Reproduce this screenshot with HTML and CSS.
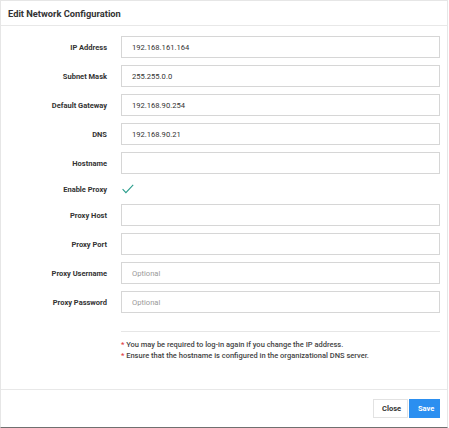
FILE: index.html
```html
<!DOCTYPE html>
<html>
<head>
<meta charset="utf-8">
<link rel="stylesheet" href="styles.css">
</head>
<body>
<div class="modal">
  <div class="modal-header">
    <h1 class="title">Edit Network Configuration</h1>
  </div>
  <div class="modal-body">
    <div class="form">
      <label class="label">IP Address</label>
      <div class="input">192.168.161.164</div>
      <label class="label">Subnet Mask</label>
      <div class="input">255.255.0.0</div>
      <label class="label">Default Gateway</label>
      <div class="input">192.168.90.254</div>
      <label class="label">DNS</label>
      <div class="input">192.168.90.21</div>
      <label class="label">Hostname</label>
      <div class="input"></div>
      <label class="label short">Enable Proxy</label>
      <div class="check-cell">
        <svg class="check" width="12" height="10" viewBox="0 0 12 10"><path d="M0.6 5.2 L3.9 8.6 L11.2 0.8" fill="none" stroke="#2a9d8c" stroke-width="1.1"/></svg>
      </div>
      <label class="label">Proxy Host</label>
      <div class="input"></div>
      <label class="label">Proxy Port</label>
      <div class="input"></div>
      <label class="label">Proxy Username</label>
      <div class="input placeholder">Optional</div>
      <label class="label">Proxy Password</label>
      <div class="input placeholder">Optional</div>
    </div>
    <div class="notes">
      <p class="note"><span class="star">*</span> You may be required to log-in again if you change the IP address.</p>
      <p class="note"><span class="star">*</span> Ensure that the hostname is configured in the organizational DNS server.</p>
    </div>
  </div>
  <div class="modal-footer">
    <button class="btn btn-close">Close</button>
    <button class="btn btn-save">Save</button>
  </div>
</div>
</body>
</html>
```
FILE: styles.css
```css
html, body {
  margin: 0;
  padding: 0;
  background: #ffffff;
}
body {
  font-family: Roboto, "Liberation Sans", Arial, sans-serif;
  color: #333333;
}
.modal {
  width: 448px;
  height: 428px;
  border: 1px solid #e6e6e6;
  border-bottom: 1px solid #707070;
  display: flex;
  flex-direction: column;
  box-sizing: border-box;
}
.modal-header {
  height: 24px;
  border-bottom: 1px solid #e8e8e8;
  display: flex;
  align-items: center;
  padding-left: 7px;
}
.title {
  margin: 0;
  font-size: 9.3px;
  font-weight: 700;
  color: #333;
}
.modal-body {
  flex: 1;
  padding: 10px 7px 0 0;
}
.form {
  display: grid;
  grid-template-columns: 106px 1fr;
  column-gap: 14px;
  row-gap: 7px;
}
.label {
  font-size: 7.5px;
  font-weight: 700;
  text-align: right;
  align-self: center;
  color: #333;
}
.input {
  height: 22px;
  box-sizing: border-box;
  border: 1px solid #d6d6d6;
  display: flex;
  align-items: center;
  padding-left: 10px;
  font-size: 7.6px;
  color: #333;
}
.input.placeholder {
  color: #9a9a9a;
}
.check-cell {
  height: 16px;
  display: flex;
  align-items: center;
  padding-left: 1px;
}
.notes {
  margin: 18px 0 0 120px;
  border-top: 1px solid #e6e6e6;
  padding-top: 7px;
}
.note {
  margin: 0;
  font-size: 7.5px;
  font-weight: 500;
  line-height: 11px;
  color: #444;
}
.star {
  color: #e0383e;
}
.modal-footer {
  height: 38px;
  border-top: 1px solid #e8e8e8;
  display: flex;
  justify-content: flex-end;
  align-items: flex-start;
  padding: 9px 7px 0 0;
  box-sizing: border-box;
  gap: 1px;
}
.btn {
  font-family: Roboto, "Liberation Sans", Arial, sans-serif;
  font-size: 7.5px;
  font-weight: 700;
  height: 19px;
  padding: 0 8px;
  border: 1px solid #e2e2e2;
  background: #fff;
  color: #333;
  border-radius: 0;
}
.btn-close {
  width: 35px;
}
.btn-save {
  width: 31px;
  background: #2b8ff0;
  border-color: #2b8ff0;
  color: #fff;
}
```
